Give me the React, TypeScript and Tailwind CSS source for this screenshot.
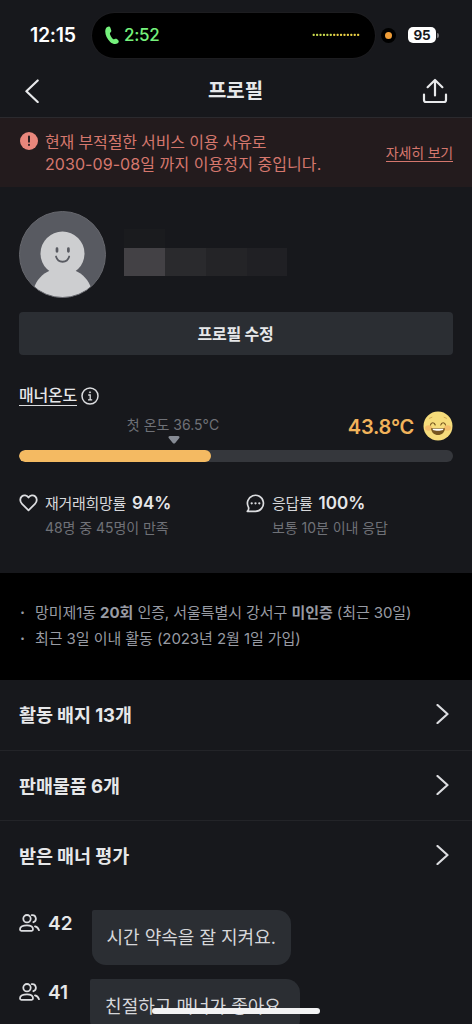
import React from 'react';
import clsx from 'clsx';

const EqualizerDots: React.FC = () => (
  <svg width="48" height="4" viewBox="0 0 48 4">
    {Array.from({ length: 14 }).map((_, i) => (
      <rect key={i} x={0.6 + i * 3.42} y="0.8" width="2.2" height="2.2" rx="0.8" fill={i < 6 ? '#c8d84e' : '#e9cf45'} />
    ))}
  </svg>
);

const StatusBar: React.FC = () => (
  <div className="flex h-[70px] shrink-0 items-center">
    <div className="w-[92px] pl-[30px] text-[19.5px] leading-6 font-semibold tracking-[-0.3px] text-white">12:15</div>
    <div className="flex h-[45px] w-[283px] items-center rounded-full bg-black pr-[15px] pl-[13px] ring-1 ring-[#1d1d20]">
      <svg width="14" height="19" viewBox="0 0 14 19" fill="#75f17c">
        <path d="M2.3 1C3.6.1 4.900.4 5.400 1.800l.8 2.500c.3 1 0 1.700-.8 2.300-.5.4-.6.900-.4 1.600.6 1.900 1.600 3.400 3 4.700.5.5 1 .5 1.600.1.900-.5 1.700-.5 2.400.1l1.200 1.200c.9.9.7 2.100-.5 3-2.100 1.500-5 .800-7.500-1.400C1.900 12.900-.1 8.500.3 4.500.4 2.900 1.100 1.700 2.300 1z" />
      </svg>
      <span className="ml-[5px] text-[17px] leading-6 font-medium tracking-[-0.3px] text-[#75f17c]">2:52</span>
      <div className="ml-auto">
        <EqualizerDots />
      </div>
    </div>
    <div className="ml-[6px] flex size-[15px] items-center justify-center rounded-full bg-black">
      <div className="size-[7px] rounded-full bg-[#ef9d38]" />
    </div>
    <div className="ml-[12px] flex h-4 w-7 items-center justify-center rounded-[5px] bg-white text-[13.5px] leading-4 font-bold tracking-[-0.3px] text-[#17181c]">
      95
    </div>
    <div className="ml-px h-[5px] w-[2px] rounded-r-full bg-[#77787b]" />
  </div>
);

const NavBar: React.FC = () => (
  <header className="flex h-12 shrink-0 items-center justify-between border-b border-[#2b2a2e] pr-[24px] pb-[5px] pl-[24px]">
    <svg width="16" height="24" viewBox="0 0 16 24" fill="none" stroke="#e8e9eb" strokeWidth="2.200" strokeLinecap="round" strokeLinejoin="round">
      <path d="M13.700 1.500 2.400 12.300 13.700 23" />
    </svg>
    <h1 className="pl-[9px] text-[20px] leading-7 font-bold text-[#e6e7e9]">프로필</h1>
    <svg width="26" height="26" viewBox="0 0 26 26" fill="none" stroke="#e8e9eb" strokeWidth="2.200" strokeLinecap="round" strokeLinejoin="round">
      <path d="M2 16.500v5.500a2 2 0 0 0 2 2h18a2 2 0 0 0 2-2v-5.500" />
      <path d="M13 17.500V2M5.600 9.200 13 2l7.400 7.200" />
    </svg>
  </header>
);

const SuspensionBanner: React.FC = () => (
  <div className="flex h-[69px] shrink-0 items-center bg-[#231b1d] pr-[19px] pl-5 text-[#d5776d]">
    <svg className="mb-[23px]" width="18" height="18" viewBox="0 0 18 18">
      <circle cx="9" cy="9" r="9" fill="#e9877c" />
      <path d="M9 4.500v5.200M9 12.700v.4" stroke="#231b1d" strokeWidth="1.900" strokeLinecap="round" />
    </svg>
    <p className="ml-[7px] text-[16px] leading-[22px] tracking-[-0.15px] whitespace-nowrap">
      현재 부적절한 서비스 이용 사유로
      <br />
      <span className="tracking-[0.07px]">2030-09-08일 까지 이용정지 중입니다.</span>
    </p>
    <a className="ml-auto border-b border-[#d5776d] text-[14px] leading-[17px] tracking-[-0.2px]">자세히 보기</a>
  </div>
);

const Avatar: React.FC = () => (
  <svg width="87" height="87" viewBox="0 0 87 87">
    <defs>
      <clipPath id="avatar">
        <circle cx="43.500" cy="43.500" r="43" />
      </clipPath>
    </defs>
    <g clipPath="url(#avatar)">
      <rect width="87" height="87" fill="#585a61" />
      <circle cx="43.500" cy="42.500" r="22" fill="#cdced0" />
      <path d="M31 59.500C23 63 17.500 69 14.500 78v9h58v-9c-3-9-8.500-15-16.500-18.500z" fill="#cdced0" />
    </g>
    <circle cx="43.500" cy="43.500" r="43" fill="none" stroke="#66676d" />
    <path d="M38 37.700v2.600M49.400 37.700v2.600" stroke="#585a61" strokeWidth="2.700" strokeLinecap="round" />
    <path d="M37 45.500c2 7 11.200 7 13.200 0" fill="none" stroke="#585a61" strokeWidth="1.800" strokeLinecap="round" />
  </svg>
);

const HiddenName: React.FC = () => (
  <div className="ml-[18px] w-[163px]">
    <div className="h-[19px] w-[41px] bg-[#1a1b1e]" />
    <div className="flex h-[28px]">
      <div className="w-[41px] bg-[#434145]" />
      <div className="w-[41px] bg-[#2a2a2d]" />
      <div className="w-[41px] bg-[#242427]" />
      <div className="w-[40px] bg-[#202024]" />
    </div>
  </div>
);

const SmileFace: React.FC = () => (
  <svg width="30" height="30" viewBox="0 0 30 30" fill="none">
    <circle cx="15" cy="15" r="14.500" fill="#f6dc7b" />
    <ellipse cx="5.500" cy="17" rx="3.500" ry="2.800" fill="#f3bd6b" />
    <ellipse cx="24.500" cy="17" rx="3.500" ry="2.800" fill="#f3bd6b" />
    <path d="M6.500 7.300l2.400-1M23.500 7.300l-2.400-1" stroke="#c99d4a" strokeWidth=".8" strokeLinecap="round" />
    <path d="M7.500 14c.5-3 4-3 4.700 0M17.800 14c.6-3 4.100-3 4.700 0" stroke="#765620" strokeWidth="1.200" strokeLinecap="round" />
    <path d="M8 17.200h14c-.3 4.200-3.200 6.800-7 6.800s-6.700-2.600-7-6.800z" fill="#765620" />
    <path d="M9.800 17.800h10.400v1.300c-2.800 1-7.600 1-10.400 0z" fill="#fff" />
  </svg>
);

const MannerTemperature: React.FC = () => (
  <section>
    <div className="flex h-5 items-center">
      <span className="border-b border-[#dcdde0] text-[16px] leading-[19px] font-medium tracking-[-0.2px] text-[#e6e7e9]">매너온도</span>
      <svg className="ml-[4px]" width="18" height="18" viewBox="0 0 18 18" fill="none" stroke="#dcdde0" strokeWidth="1.500">
        <circle cx="9" cy="9" r="8" />
        <path d="M7.200 8h2v4.600M7 12.800h4.200" strokeWidth="1.300" />
        <circle cx="9" cy="5.300" r=".6" fill="#dcdde0" strokeWidth=".8" />
      </svg>
    </div>
    <div className="flex h-[44px] items-start">
      <div className="flex w-[310px] flex-col items-center pt-[8px]">
        <span className="mr-[2px] text-[14px] leading-[22px] text-[#6f7177]">첫 온도 36.5°C</span>
        <svg width="12" height="8" viewBox="0 0 12 8" fill="#868b94">
          <path d="M2 0h8c1.500 0 2 1.200 1.100 2.200L7.200 7c-.7.8-1.700.8-2.400 0L.9 2.200C0 1.200.5 0 2 0z" />
        </svg>
      </div>
      <span className="mt-[7px] ml-auto text-[20px] leading-7 font-semibold tracking-[-0.25px] text-[#f1b35b]">43.8°C</span>
      <div className="mt-[5px] ml-[9px]">
        <SmileFace />
      </div>
    </div>
    <div className="h-3 overflow-hidden rounded-full bg-[#35373c]">
      <div className="h-full w-[192px] rounded-full bg-[#f4ba62]" />
    </div>
  </section>
);

interface StatProps {
  icon: React.ReactNode;
  label: string;
  value: string;
  note: string;
}

const Stat: React.FC<StatProps> = ({ icon, label, value, note }) => (
  <div className="flex">
    <div className="mt-[2px] w-[26px] shrink-0">{icon}</div>
    <div className="whitespace-nowrap">
      <div className="flex h-6 items-center text-[#d6d7da]">
        <span className="text-[15px] tracking-[-0.3px]">{label}</span>
        <span className="ml-[6px] text-[17px] font-semibold text-[#e6e7e9]">{value}</span>
      </div>
      <div className="h-6 text-[14px] leading-[23px] tracking-[-0.05px] text-[#6f7177]">{note}</div>
    </div>
  </div>
);

const HeartIcon = (
  <svg width="19" height="18" viewBox="0 0 19 18" fill="none" stroke="#dcdde0" strokeWidth="1.800" strokeLinejoin="round">
    <path d="M9.500 16.300 3 9.800C.7 7.500.8 4.200 2.700 2.500c2-1.800 5-1.500 6.800 1 1.800-2.500 4.800-2.800 6.800-1 1.900 1.700 2 5-.3 7.300z" />
  </svg>
);

const ChatIcon = (
  <svg width="19" height="19" viewBox="0 0 19 19" fill="none" stroke="#dcdde0" strokeWidth="1.700" strokeLinejoin="round">
    <path d="M2.500 13.300A8 8 0 1 1 9.500 17.300H1.300c1-1 1.800-2.200 1.200-4z" />
    <path d="M5.700 9.300h.01M9.500 9.300h.01M13.300 9.300h.01" strokeWidth="2.300" strokeLinecap="round" />
  </svg>
);

const PeopleIcon: React.FC = () => (
  <svg width="21" height="18" viewBox="0 0 21 18" fill="none" stroke="#dcdde0" strokeWidth="1.800" strokeLinecap="round" strokeLinejoin="round">
    <circle cx="8" cy="4.700" r="3.700" />
    <path d="M1 15.300c0-2.400 3-4 7-4s6 1.600 6 4c0 .9-.5 1.500-1.300 1.500H2.300c-.8 0-1.300-.6-1.300-1.500z" />
    <path d="M12.700 1.200c4.500-.6 5.700 5.400 1.700 7M16 12.300c2 .5 3.400 1.800 4 3.900" />
  </svg>
);

const menuItems = ['활동 배지 13개', '판매물품 6개', '받은 매너 평가'];

const reviews = [
  { count: 42, text: '시간 약속을 잘 지켜요.', bubble: 'ml-[19px] w-[199px]' },
  { count: 41, text: '친절하고 매너가 좋아요.', bubble: 'ml-[22px] w-[210px]' },
];

export default function App() {
  return (
    <div className="relative flex h-[1024px] w-[472px] flex-col overflow-hidden bg-[#17181c] font-[Inter,'Noto_Sans_CJK_KR',sans-serif] text-[#e6e7e9]">
      <StatusBar />
      <NavBar />
      <SuspensionBanner />

      <main className="flex h-[386px] shrink-0 flex-col px-[19px] pt-[24px]">
        <div className="flex h-[87px] items-center">
          <Avatar />
          <div className="pb-[5px]">
            <HiddenName />
          </div>
        </div>
        <button className="mt-[14px] h-[43px] shrink-0 rounded-[4px] bg-[#2b2e33] pr-px text-[16px] font-bold tracking-[-0.2px]">프로필 수정</button>
        <div className="mt-[31px]">
          <MannerTemperature />
        </div>
        <div className="mt-[30px] grid grid-cols-[227px_1fr]">
          <Stat icon={HeartIcon} label="재거래희망률" value="94%" note="48명 중 45명이 만족" />
          <Stat icon={ChatIcon} label="응답률" value="100%" note="보통 10분 이내 응답" />
        </div>
      </main>

      <ul className="h-[107px] shrink-0 bg-black pt-[27px] pl-[19px] text-[15px] leading-[26px] tracking-[-0.07px] whitespace-nowrap text-[#989ba3]">
        <li className="flex">
          <span className="w-4 pl-px font-bold">·</span>
          <span>
            망미제1동 <b>20회</b> 인증, 서울특별시 강서구 <b>미인증</b> (최근 30일)
          </span>
        </li>
        <li className="flex">
          <span className="w-4 pl-px font-bold">·</span>
          <span>최근 3일 이내 활동 (2023년 2월 1일 가입)</span>
        </li>
      </ul>

      <nav className="shrink-0">
        {menuItems.map((item, i) => (
          <div
            key={item}
            className={clsx(
              'flex items-center justify-between pr-[23px] pl-[19px]',
              i < menuItems.length - 1 ? 'h-[70.5px] border-b border-[#232428]' : 'h-[69px]'
            )}
          >
            <span className="pt-px text-[18.5px] leading-6 font-bold tracking-[-0.1px]">{item}</span>
            <svg className="mb-px" width="13" height="20" viewBox="0 0 13 20" fill="none" stroke="#dcdde0" strokeWidth="2.200" strokeLinecap="round" strokeLinejoin="round">
              <path d="M1.500 1 11.500 10 1.500 19" />
            </svg>
          </div>
        ))}
      </nav>

      <section className="mt-[20px] flex flex-col gap-[14px] pl-[19px]">
        {reviews.map((review) => (
          <div key={review.count} className="flex h-[55px] shrink-0 items-start">
            <div className="mt-[4px]">
              <PeopleIcon />
            </div>
            <span className="ml-[8px] text-[19px] leading-[27px] font-semibold">{review.count}</span>
            <div className={clsx('flex h-[55px] items-center rounded-[14px] rounded-tl-[2px] bg-[#2b2e33] pl-[15px] text-[18px] whitespace-nowrap text-[#d6d7da]', review.bubble)}>
              {review.text}
            </div>
          </div>
        ))}
      </section>

      {/* Home indicator */}
      <div className="absolute bottom-[10px] left-[152px] h-[6px] w-[168px] rounded-full bg-[#f3f3f4]" />
    </div>
  );
}
